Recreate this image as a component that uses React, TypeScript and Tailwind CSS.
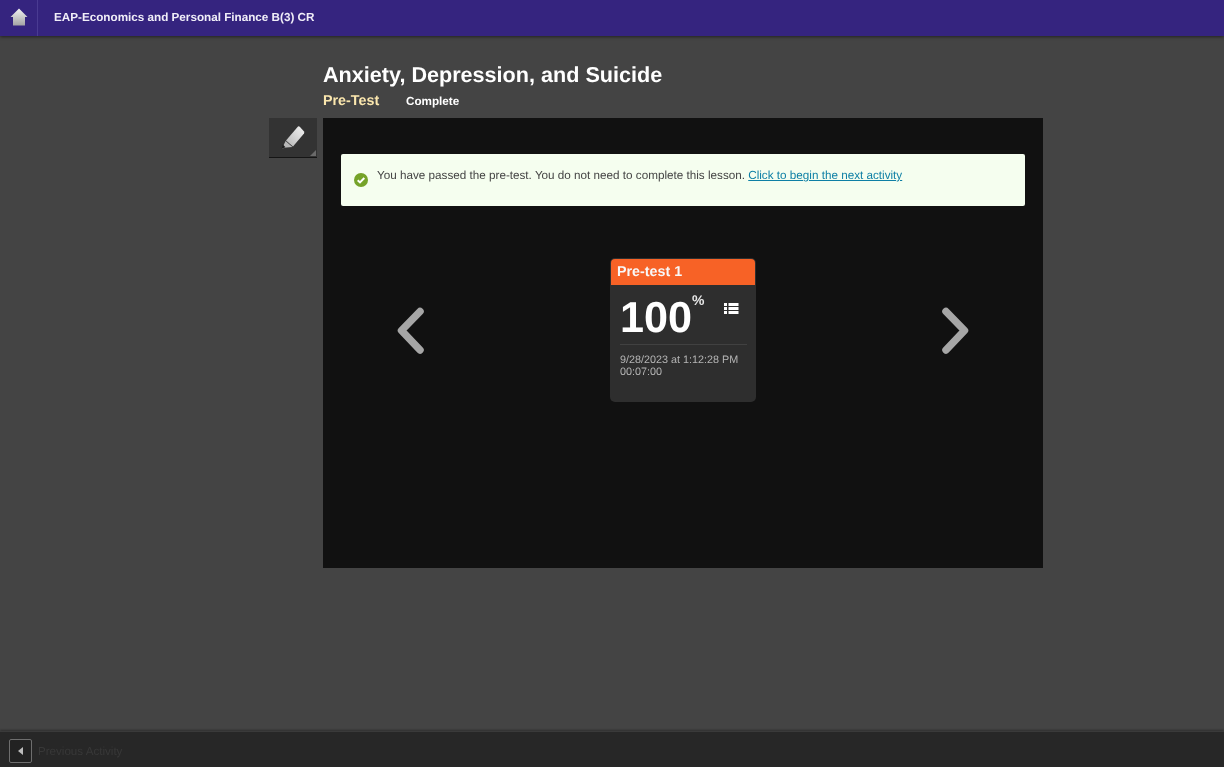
function HomeIcon() {
  return (
    <svg width="18" height="18" viewBox="0 0 18 18">
      <defs>
        <linearGradient id="home" x1="0" y1="0" x2="0" y2="1">
          <stop offset="0" stopColor="#f2f2f2" />
          <stop offset="1" stopColor="#a4a4a4" />
        </linearGradient>
      </defs>
      <path d="M9 0.5 L17.5 9 L15 9 L15 17.5 L3 17.5 L3 9 L0.5 9 Z" fill="url(#home)" />
    </svg>
  );
}

function PencilIcon() {
  return (
    <svg width="24" height="24" viewBox="0 0 24 24">
      <defs>
        <linearGradient id="pencil" x1="1" y1="0" x2="0" y2="1">
          <stop offset="0" stopColor="#f4f4f4" />
          <stop offset="1" stopColor="#b4b4b4" />
        </linearGradient>
      </defs>
      <path
        d="M17 1.5 Q18 1 19 2 L23 6.5 Q23.5 7.5 23 8.5 L12 21.5 L5 15.5 Z"
        fill="url(#pencil)"
      />
      <path d="M4.6 16 L11.4 22 L5.5 22.6 L1 23.6 Z" fill="#b8b8b8" />
      <path d="M1.8 19.4 L4.6 22.2 L0.6 23.7 Z" fill="#1f1f1f" />
    </svg>
  );
}

function Chevron({ left }: { left?: boolean }) {
  return (
    <svg width="30" height="48" viewBox="0 0 30 48">
      <path
        d={left ? 'M25 4.5 L6.5 23.5 L25 43' : 'M5 4.5 L23.5 23.5 L5 43'}
        fill="none"
        stroke="#a6a6a6"
        strokeWidth="7.5"
        strokeLinecap="round"
        strokeLinejoin="round"
      />
    </svg>
  );
}

function ListIcon() {
  return (
    <svg width="15" height="13" viewBox="0 0 15 13" fill="#ffffff">
      <rect x="0" y="1" width="3" height="3" />
      <rect x="4.5" y="1" width="10" height="3" />
      <rect x="0" y="5" width="3" height="3" />
      <rect x="4.5" y="5" width="10" height="3" />
      <rect x="0" y="9" width="3" height="3" />
      <rect x="4.5" y="9" width="10" height="3" />
    </svg>
  );
}

function CheckBadge() {
  return (
    <svg width="14" height="14" viewBox="0 0 14 14" className="mt-[6px] shrink-0">
      <circle cx="7" cy="7" r="7" fill="#75a329" />
      <path d="M3.7 7.2 L6 9.4 L10.3 5" fill="none" stroke="#fff" strokeWidth="2" />
    </svg>
  );
}

export default function App() {
  return (
    <div className="flex h-[767px] w-[1224px] flex-col overflow-hidden bg-[#444444] font-['Liberation_Sans',Arial,sans-serif] [text-rendering:geometricPrecision] [will-change:transform]">
      {/* Header */}
      <header className="flex h-[36px] shrink-0 items-stretch bg-[#35247f] shadow-[0_1px_3px_rgba(0,0,0,0.5)]">
        <div className="ml-px flex w-[37px] items-center justify-center border-r border-[#4a3b92] pb-[2px]">
          <HomeIcon />
        </div>
        <div className="ml-[16px] pt-[11px] text-[11.7px] leading-[14px] font-bold text-[#f0eef8]">
          EAP-Economics and Personal Finance B(3) CR
        </div>
      </header>

      {/* Main */}
      <main className="flex flex-1 justify-start pl-[269px]">
        <div className="flex flex-col">
          <div className="ml-[54px] pt-[25px]">
            <h1 className="text-[21.6px] leading-[28px] font-bold text-white">
              Anxiety, Depression, and Suicide
            </h1>
            <div className="mt-[4px] mb-[-1px] flex h-[17px] items-center">
              <span className="w-[83px] text-[14.3px] font-bold text-[#fbe7ae]">Pre-Test</span>
              <span className="text-[11.7px] font-bold text-white">Complete</span>
            </div>
          </div>
          <div className="mt-[9px] flex gap-[6px]">
            <div className="relative flex h-[40px] w-[48px] items-center justify-center border-b border-[#151515] bg-[#333333] pb-px">
              <PencilIcon />
              <div className="absolute right-[1px] bottom-[1px] h-0 w-0 border-b-[6px] border-l-[6px] border-b-[#6a6a6a] border-l-transparent" />
            </div>

            <div className="flex h-[450px] w-[720px] flex-col bg-[#111111] px-[18px] pt-[36px]">
              <div className="flex h-[52px] gap-[9px] rounded-[2px] bg-[#f5feef] px-[13px] pt-[13px] pb-0">
                <CheckBadge />
                <p className="pt-[2px] text-[11.7px] leading-[14px] text-[#444444]">
                  You have passed the pre-test. You do not need to complete this lesson.{' '}
                  <a className="text-[#0d7fa5] underline">Click to begin the next activity</a>
                </p>
              </div>

              <div className="mt-[52px] flex items-start">
                <div className="mt-[49px] ml-[54px] h-[48px] w-[30px]">
                  <Chevron left />
                </div>
                <div className="ml-[185px] h-[144px] w-[146px] overflow-hidden rounded-[5px] bg-[#2e2e2e]">
                  <div className="mx-px mt-px flex h-[26px] items-center rounded-t-[4px] bg-[#f76226] pt-px pl-[6px] text-[14.3px] font-bold text-[#f8f8f8]">
                    Pre-test 1
                  </div>
                  <div className="relative mr-[9px] ml-[10px] flex h-[60px] items-start border-b border-[#414141]">
                    <span className="mt-[8px] text-[43.2px] leading-[50px] font-bold text-white">100</span>
                    <span className="mt-[7px] text-sm leading-[16px] font-bold text-[#e8e8e8]">%</span>
                    <div className="absolute top-[17px] right-[8px]">
                      <ListIcon />
                    </div>
                  </div>
                  <div className="mt-[9px] mr-[9px] ml-[10px] text-[10.8px] leading-[12px] text-[#b4b4b4]">
                    <div>9/28/2023 at 1:12:28 PM</div>
                    <div>00:07:00</div>
                  </div>
                </div>
                <div className="mt-[49px] ml-[185px] h-[48px] w-[30px]">
                  <Chevron />
                </div>
              </div>
            </div>
          </div>
        </div>
      </main>

      {/* Footer */}
      <footer className="flex h-[36px] shrink-0 items-center gap-[6px] border-t border-[#3a3a3a] bg-[#272727] pt-[3px] pl-[9px] shadow-[0_-1px_2px_rgba(0,0,0,0.35)]">
        <div className="flex h-[24px] w-[23px] items-center justify-center rounded-[2px] border border-[#6e6e6e] bg-[#222222]">
          <div className="h-0 w-0 border-y-[4px] border-r-[5px] border-y-transparent border-r-[#bdbdbd]" />
        </div>
        <span className="pt-px text-[11.6px] text-[#383838]">Previous Activity</span>
      </footer>
    </div>
  );
}
